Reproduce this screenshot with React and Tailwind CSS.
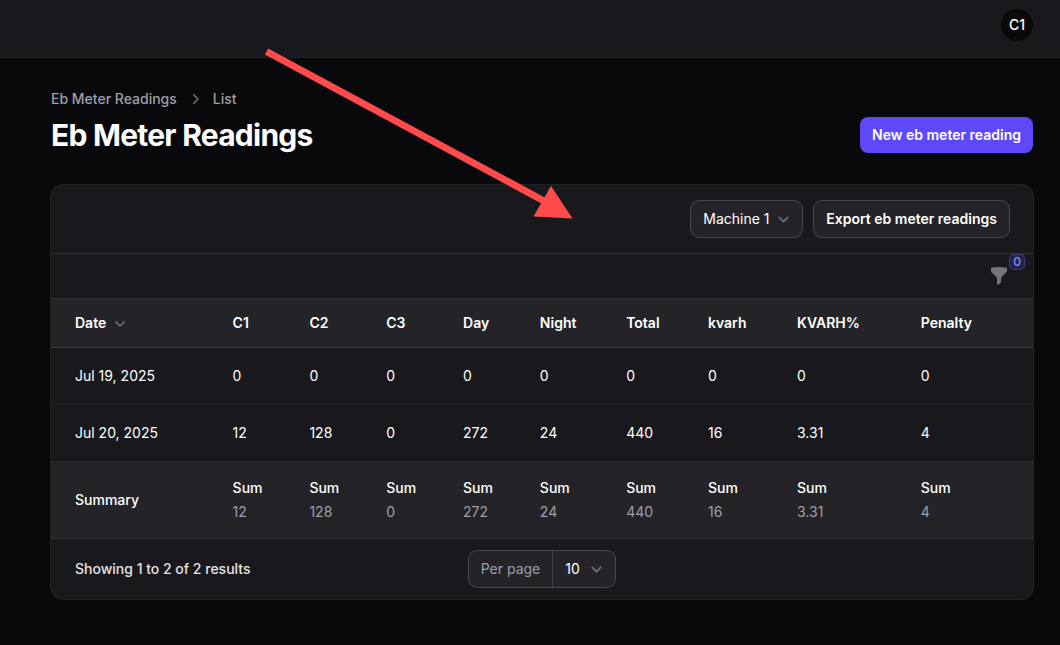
import { useState } from "react"
import { HiMiniChevronDown, HiMiniChevronRight, HiMiniFunnel } from "react-icons/hi2"

const columns = [
  { key: "c1", label: "C1" },
  { key: "c2", label: "C2" },
  { key: "c3", label: "C3" },
  { key: "day", label: "Day" },
  { key: "night", label: "Night" },
  { key: "total", label: "Total" },
  { key: "kvarh", label: "kvarh" },
  { key: "kvarhPercent", label: "KVARH%" },
  { key: "penalty", label: "Penalty" }
]

const readings = [
  {
    date: "Jul 19, 2025",
    c1: 0,
    c2: 0,
    c3: 0,
    day: 0,
    night: 0,
    total: 0,
    kvarh: 0,
    kvarhPercent: 0,
    penalty: 0
  },
  {
    date: "Jul 20, 2025",
    c1: 12,
    c2: 128,
    c3: 0,
    day: 272,
    night: 24,
    total: 440,
    kvarh: 16,
    kvarhPercent: 3.31,
    penalty: 4
  }
]

const sumOf = key => readings.reduce((sum, reading) => sum + reading[key], 0)

const SelectChevron = () => (
  <svg
    viewBox="0 0 20 20"
    fill="none"
    className="pointer-events-none absolute right-2 top-2 size-[21px] text-gray-500"
    aria-hidden="true"
  >
    <path
      d="m6 8 4 4 4-4"
      stroke="currentColor"
      strokeWidth="1.5"
      strokeLinecap="round"
      strokeLinejoin="round"
    />
  </svg>
)

const Topbar = () => (
  <header className="flex justify-end border-b border-[#232326] bg-[#19191d] pt-[9px] pr-[27px] pb-4">
    <button
      type="button"
      aria-label="User menu"
      className="size-8 rounded-full bg-zinc-950 text-sm font-medium text-white"
    >
      C1
    </button>
  </header>
)

const PageHeader = () => (
  <div className="flex items-end justify-between">
    <div>
      <nav className="flex items-center gap-x-2 text-sm font-medium text-zinc-400">
        <a href="#readings">Eb Meter Readings</a>
        <HiMiniChevronRight className="size-5 text-zinc-500" aria-hidden="true" />
        <a href="#list">List</a>
      </nav>
      <h1 className="mt-2 text-3xl font-bold tracking-tight text-white">
        Eb Meter Readings
      </h1>
    </div>
    <button
      type="button"
      className="rounded-lg bg-[#5d48fb] px-3 py-2 text-sm font-semibold text-white"
    >
      New eb meter reading
    </button>
  </div>
)

const ReadingsTable = () => (
  <table className="w-full table-auto text-left text-sm text-white">
    <thead className="border-b border-white/10 bg-[#242428]">
      <tr>
        <th scope="col" className="py-[14px] pr-3 pl-6 font-semibold">
          <button type="button" className="flex items-center gap-x-1">
            Date
            <HiMiniChevronDown className="size-5 text-zinc-500" aria-hidden="true" />
          </button>
        </th>
        {columns.map(column => (
          <th key={column.key} scope="col" className="px-3 py-[14px] font-semibold last:pr-6">
            {column.label}
          </th>
        ))}
      </tr>
    </thead>
    <tbody>
      {readings.map(reading => (
        <tr key={reading.date} className="border-b border-white/5">
          <td className="py-[18px] pr-3 pl-6">{reading.date}</td>
          {columns.map(column => (
            <td key={column.key} className="px-3 py-[18px] last:pr-6">
              {reading[column.key]}
            </td>
          ))}
        </tr>
      ))}
    </tbody>
    <tfoot className="bg-[#242428]">
      <tr>
        <th scope="row" className="py-4 pr-3 pl-6 font-medium">
          Summary
        </th>
        {columns.map(column => (
          <td key={column.key} className="px-3 py-4 last:pr-6">
            <div className="flex flex-col gap-y-1">
              <span className="font-medium">Sum</span>
              <span className="text-zinc-400">{sumOf(column.key)}</span>
            </div>
          </td>
        ))}
      </tr>
    </tfoot>
  </table>
)

const Pagination = () => {
  const [perPage, setPerPage] = useState("10")

  return (
    <div className="grid grid-cols-[1fr_auto_1fr] items-center border-t border-white/10 px-6 py-3">
      <span className="text-sm font-medium text-zinc-200">
        Showing 1 to 2 of 2 results
      </span>
      <div className="flex rounded-lg bg-[#242428] text-sm ring-1 ring-white/20">
        <label htmlFor="per-page" className="border-r border-white/15 px-3 py-2 text-zinc-400">
          Per page
        </label>
        <div className="relative">
          <select
            id="per-page"
            value={perPage}
            onChange={e => setPerPage(e.target.value)}
            className="w-[62px] appearance-none bg-transparent py-2 pr-8 pl-3 text-white outline-none"
          >
            <option value="10">10</option>
          </select>
          <SelectChevron />
        </div>
      </div>
    </div>
  )
}

const App = () => {
  const [machine, setMachine] = useState("1")

  return (
    <div className="relative min-h-screen bg-zinc-950 font-['Inter',sans-serif]">
      <Topbar />

      <main className="pt-[31px] pr-[27px] pb-8 pl-[51px]">
        <PageHeader />

        <section className="mt-8 overflow-hidden rounded-xl bg-[#19191d] ring-1 ring-white/10">
          <div className="flex justify-end gap-x-3 border-b border-white/10 px-6 py-4">
            <div className="relative rounded-lg bg-[#242428] ring-1 ring-white/20">
              <select
                aria-label="Machine"
                value={machine}
                onChange={e => setMachine(e.target.value)}
                className="appearance-none bg-transparent py-2 pr-8 pl-3 text-sm text-white outline-none"
              >
                <option value="1">Machine 1</option>
              </select>
              <SelectChevron />
            </div>
            <button
              type="button"
              className="rounded-lg bg-[#242428] px-3 py-2 text-sm font-semibold text-white ring-1 ring-white/20"
            >
              Export eb meter readings
            </button>
          </div>

          <div className="flex justify-end border-b border-white/10 px-6 py-3">
            <button type="button" aria-label="Filter" className="relative text-[#74727c]">
              <HiMiniFunnel className="size-5" />
              <span className="absolute -top-[11px] left-[21px] flex size-[14px] items-center justify-center rounded-sm bg-[#20234a] text-xs font-medium text-[#8490f5] ring-1 ring-[#3a3f78]">
                0
              </span>
            </button>
          </div>

          <ReadingsTable />
          <Pagination />
        </section>
      </main>

      {/* Pointer arrow towards the machine select */}
      <svg
        viewBox="264 46 312 176"
        className="pointer-events-none absolute top-[46px] left-[264px] h-[176px] w-[312px]"
        aria-hidden="true"
      >
        <path d="M266.500 51.500 545 201.500" stroke="#ff4b4b" strokeWidth="7" />
        <path d="M551 186 572.500 218.500 533.500 216.500Z" fill="#ff4b4b" />
      </svg>
    </div>
  )
}

export default App
